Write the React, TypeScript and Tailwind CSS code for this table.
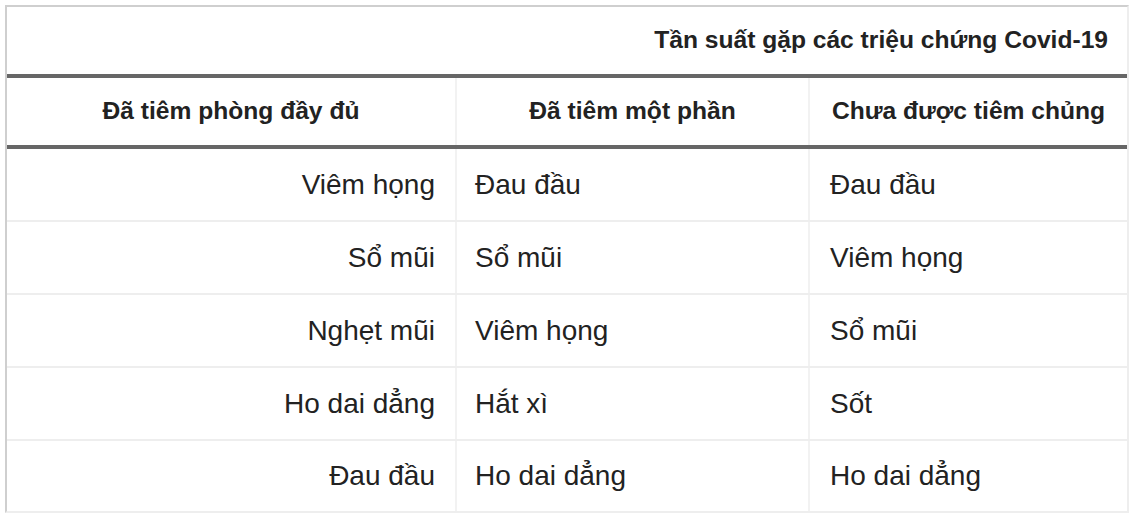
const rows: [string, string, string][] = [
  ["Viêm họng", "Đau đầu", "Đau đầu"],
  ["Sổ mũi", "Sổ mũi", "Viêm họng"],
  ["Nghẹt mũi", "Viêm họng", "Sổ mũi"],
  ["Ho dai dẳng", "Hắt xì", "Sốt"],
  ["Đau đầu", "Ho dai dẳng", "Ho dai dẳng"],
];

const headers = ["Đã tiêm phòng đầy đủ", "Đã tiêm một phần", "Chưa được tiêm chủng"];

const grid = "grid grid-cols-[448px_353px_319px]";

export default function App() {
  return (
    <div className="min-h-[532px] bg-white pl-[5px] pt-[5px] font-['Liberation_Sans',Arial,sans-serif] text-[#222]">
      <div className="w-[1124px] border-t-2 border-l-2 border-r-2 border-b-2 border-t-[#cfcfcf] border-l-[#cfcfcf] border-r-[#eeeeee] border-b-[#eeeeee]">
        <div className="flex h-[71px] items-center justify-end border-b-4 border-[#666] pr-[19px] text-[24.6px] font-bold">
          Tần suất gặp các triệu chứng Covid-19
        </div>

        <div className={`${grid} h-[71px] border-b-4 border-[#666] text-[24.6px] font-bold`}>
          {headers.map((h, i) => (
            <div
              key={h}
              className={`flex items-center justify-center ${i > 0 ? "border-l-2 border-[#f2f2f2]" : ""}`}
            >
              {h}
            </div>
          ))}
        </div>

        {rows.map((r, idx) => (
          <div
            key={idx}
            className={`${grid} text-[28px] ${idx < rows.length - 1 ? "h-[73px] border-b-2 border-[#eeeeee]" : "h-[70px]"}`}
          >
            <div className="flex items-center justify-end pr-[20px]">{r[0]}</div>
            <div className="flex items-center border-l-2 border-[#f2f2f2] pl-[18px]">{r[1]}</div>
            <div className="flex items-center border-l-2 border-[#f2f2f2] pl-[20px]">{r[2]}</div>
          </div>
        ))}
      </div>
    </div>
  );
}
